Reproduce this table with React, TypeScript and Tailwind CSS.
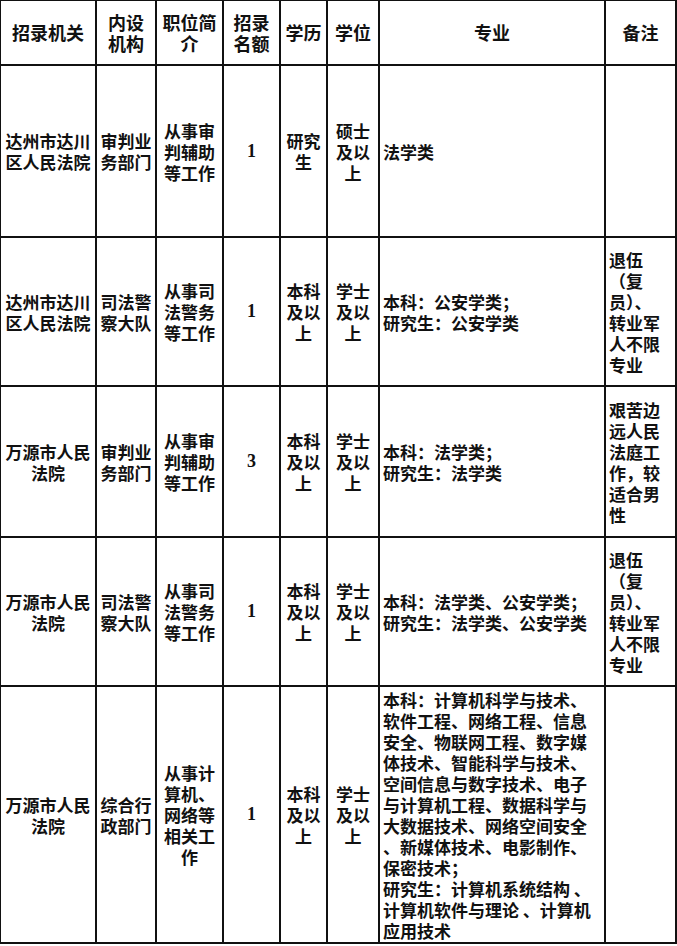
const cjk = { fontFamily: '"Noto Sans CJK SC", "Noto Sans", sans-serif' }
const serif = { fontFamily: '"Liberation Serif", "Noto Sans CJK SC", serif' }

type Row = {
  org: string[]
  dept: string[]
  job: string[]
  num: string
  edu: string[]
  degree: string[]
  major: string[]
  note: string[]
  h: string
}

const rows: Row[] = [
  {
    org: ['达州市达川', '区人民法院'],
    dept: ['审判业', '务部门'],
    job: ['从事审', '判辅助', '等工作'],
    num: '1',
    edu: ['研究', '生'],
    degree: ['硕士', '及以', '上'],
    major: ['法学类'],
    note: [],
    h: 'h-[170px]',
  },
  {
    org: ['达州市达川', '区人民法院'],
    dept: ['司法警', '察大队'],
    job: ['从事司', '法警务', '等工作'],
    num: '1',
    edu: ['本科', '及以', '上'],
    degree: ['学士', '及以', '上'],
    major: ['本科：公安学类；', '研究生：公安学类'],
    note: ['退伍', '（复', '员）、', '转业军', '人不限', '专业'],
    h: 'h-[147px]',
  },
  {
    org: ['万源市人民', '法院'],
    dept: ['审判业', '务部门'],
    job: ['从事审', '判辅助', '等工作'],
    num: '3',
    edu: ['本科', '及以', '上'],
    degree: ['学士', '及以', '上'],
    major: ['本科：法学类；', '研究生：法学类'],
    note: ['艰苦边', '远人民', '法庭工', '作，较', '适合男', '性'],
    h: 'h-[149px]',
  },
  {
    org: ['万源市人民', '法院'],
    dept: ['司法警', '察大队'],
    job: ['从事司', '法警务', '等工作'],
    num: '1',
    edu: ['本科', '及以', '上'],
    degree: ['学士', '及以', '上'],
    major: ['本科：法学类、公安学类；', '研究生：法学类、公安学类'],
    note: ['退伍', '（复', '员）、', '转业军', '人不限', '专业'],
    h: 'h-[147px]',
  },
  {
    org: ['万源市人民', '法院'],
    dept: ['综合行', '政部门'],
    job: ['从事计', '算机、', '网络等', '相关工', '作'],
    num: '1',
    edu: ['本科', '及以', '上'],
    degree: ['学士', '及以', '上'],
    major: [
      '本科：计算机科学与技术、',
      '软件工程、网络工程、信息',
      '安全、物联网工程、数字媒',
      '体技术、智能科学与技术、',
      '空间信息与数字技术、电子',
      '与计算机工程、数据科学与',
      '大数据技术、网络空间安全',
      '、新媒体技术、电影制作、',
      '保密技术；',
      '研究生：计算机系统结构 、',
      '计算机软件与理论 、计算机',
      '应用技术',
    ],
    note: [],
    h: 'h-[255px]',
  },
]

function Lines({ lines }: { lines: string[] }) {
  return (
    <>
      {lines.map((l, i) => (
        <div key={i} className="whitespace-pre">
          {l}
        </div>
      ))}
    </>
  )
}

function Cell({ children, left }: { children: React.ReactNode; left?: boolean }) {
  return (
    <div
      className={
        left
          ? 'bg-white flex flex-col justify-center items-start pl-[3px] text-left'
          : 'bg-white flex flex-col justify-center items-center text-center'
      }
    >
      {children}
    </div>
  )
}

const headers: string[][] = [
  ['招录机关'],
  ['内设', '机构'],
  ['职位简', '介'],
  ['招录', '名额'],
  ['学历'],
  ['学位'],
  ['专业'],
  ['备注'],
]

function App() {
  return (
    <div className="w-[677px] h-[946px] bg-white">
      <div
        style={cjk}
        className="grid grid-cols-[94px_58px_65px_55px_45px_50px_224px_69px] gap-[2px] bg-[#111] pt-[1px] pl-[1px] pr-[2px] pb-[2px] text-[17px] leading-[21px] font-bold text-[#111]"
      >
        {headers.map((h, i) => (
          <div key={i} className="bg-white h-[63px] flex flex-col justify-center items-center text-center text-[18px] leading-[21px]">
            <Lines lines={h} />
          </div>
        ))}
        {rows.map((r, i) => (
          <div key={i} className={'contents'}>
            <div className={r.h + ' bg-white flex flex-col justify-center items-center text-center'}>
              <Lines lines={r.org} />
            </div>
            <Cell>
              <Lines lines={r.dept} />
            </Cell>
            <Cell>
              <Lines lines={r.job} />
            </Cell>
            <Cell>
              <span style={serif} className="text-[18px]">
                {r.num}
              </span>
            </Cell>
            <Cell>
              <Lines lines={r.edu} />
            </Cell>
            <Cell>
              <Lines lines={r.degree} />
            </Cell>
            <Cell left>
              <Lines lines={r.major} />
            </Cell>
            <Cell left>
              <Lines lines={r.note} />
            </Cell>
          </div>
        ))}
      </div>
    </div>
  )
}

export default App
